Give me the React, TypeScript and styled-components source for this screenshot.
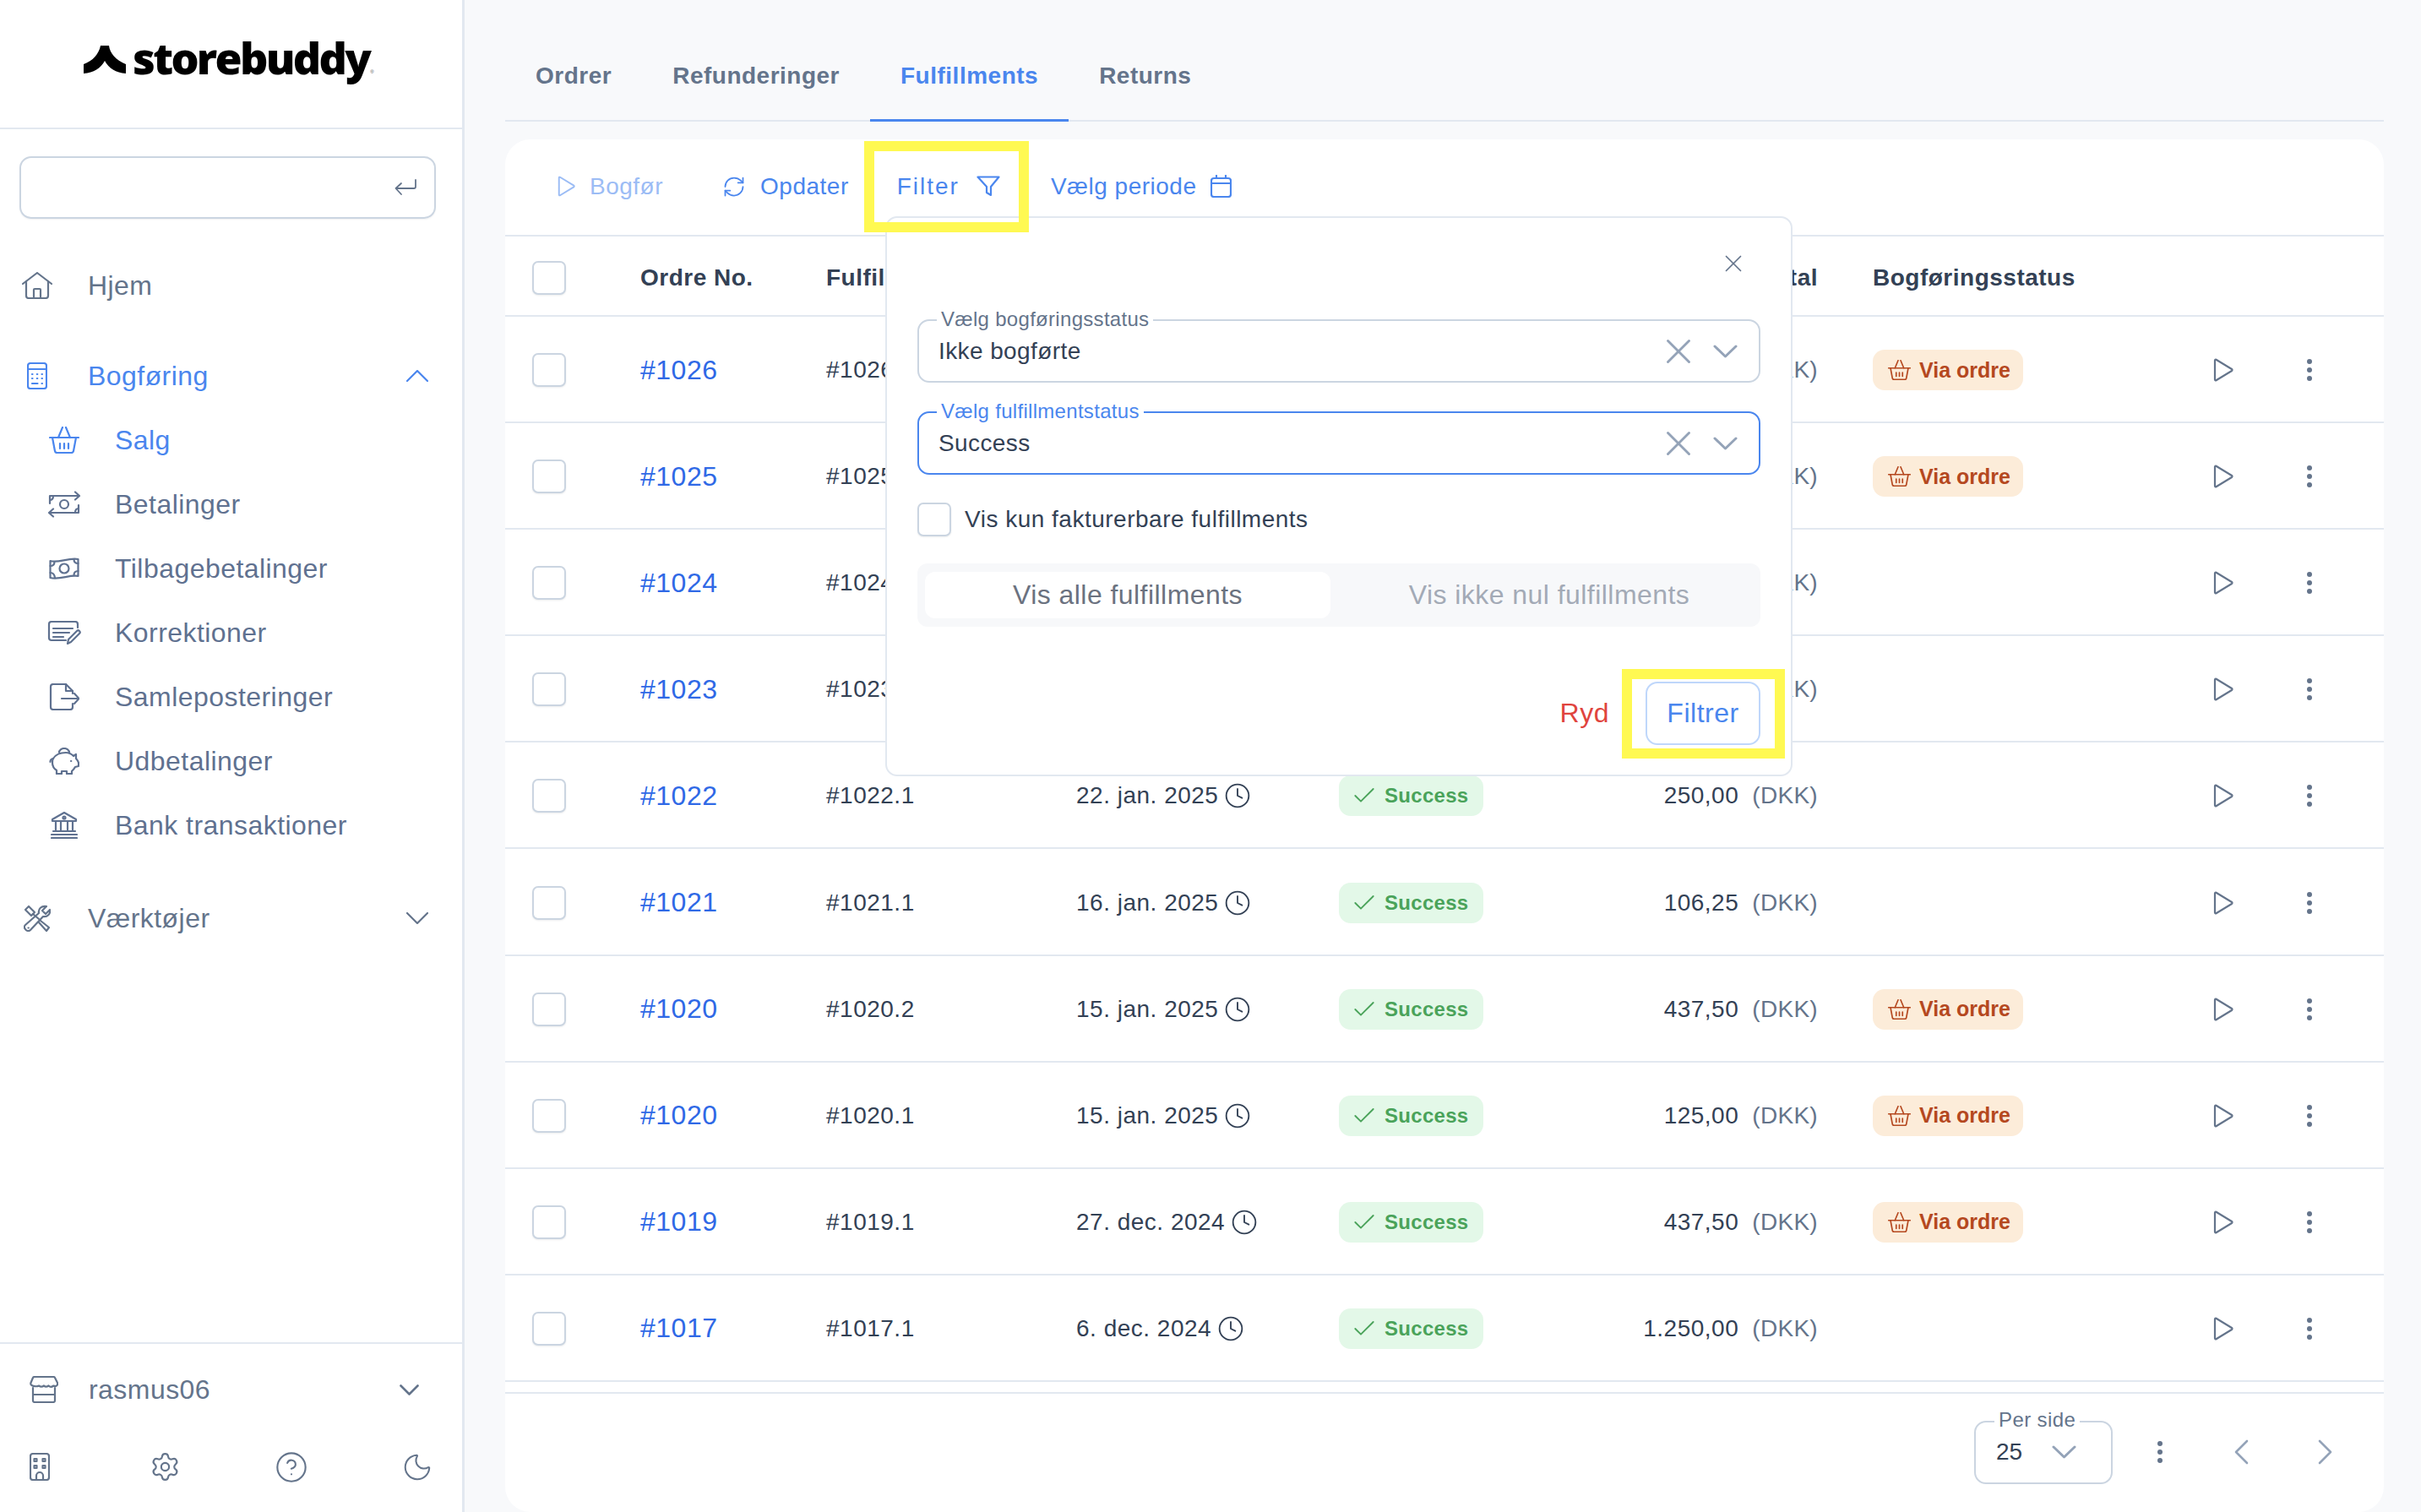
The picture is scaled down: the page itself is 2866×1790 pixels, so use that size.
import React from "react";
import styled, { createGlobalStyle } from "styled-components";
import { Check, CircleHelp, Clock, Moon, RefreshCw, Settings, X } from "lucide-react";

const colors = {
  blue: "#4a86ee",
  link: "#2f69e6",
  muted: "#64748b",
  subNav: "#5f7190",
  dark: "#334155",
  line: "#e2e8f0",
  field: "#cbd5e1",
  chevron: "#94a3b8",
  yellow: "#fff952",
};

const GlobalStyle = createGlobalStyle`
  html, body {
    margin: 0;
    padding: 0;
    background: #f8f9fb;
  }
  body {
    font-family: "Liberation Sans", Arial, sans-serif;
    color: ${colors.dark};
  }
  * {
    box-sizing: border-box;
  }
`;

const Page = styled.div`
  display: flex;
  width: 2866px;
  height: 1790px;
  overflow: hidden;
`;

/* sidebar */

const Sidebar = styled.aside`
  display: flex;
  flex-direction: column;
  flex: none;
  width: 550px;
  height: 100%;
  background: #fff;
  border-right: 3px solid ${colors.line};
`;

const LogoBar = styled.div`
  display: flex;
  align-items: flex-start;
  flex: none;
  height: 153px;
  padding: 35px 0 0 99px;
  border-bottom: 2px solid ${colors.line};
`;

const LogoMark = styled.svg`
  flex: none;
  width: 50px;
  height: 33px;
  margin: 19px 8px 0 0;
`;

const LogoText = styled.span`
  font-family: "Open Sans", sans-serif;
  font-size: 52px;
  font-weight: 800;
  line-height: 66px;
  letter-spacing: -2.7px;
  color: #000;
`;

const LogoMarkR = styled.span`
  align-self: flex-start;
  margin: 47px 0 0 1px;
  font-size: 6px;
  color: #555;
`;

const SearchBox = styled.div`
  display: flex;
  align-items: center;
  justify-content: flex-end;
  width: 493px;
  height: 74px;
  margin: 32px 0 0 23px;
  padding-right: 21px;
  border: 2.5px solid ${colors.field};
  border-radius: 14px;
  box-shadow: 0 1px 2px rgba(15, 23, 42, 0.06);
  color: ${colors.muted};
`;

const NavList = styled.nav`
  display: flex;
  flex-direction: column;
  margin-top: 41px;
`;

const NavGroup = styled.div<{ $top?: number }>`
  display: flex;
  flex-direction: column;
  margin-top: ${(props) => props.$top ?? 0}px;
`;

const NavRow = styled.div<{ $active?: boolean; $sub?: boolean }>`
  display: flex;
  align-items: center;
  height: 76px;
  padding-left: ${(props) => (props.$sub ? 32 : 0)}px;
  padding-right: 40px;
  color: ${(props) =>
    props.$active ? colors.blue : props.$sub ? colors.subNav : colors.muted};
  font-size: 32px;
  letter-spacing: 0.45px;
`;

const NavIcon = styled.span`
  display: flex;
  align-items: center;
  justify-content: center;
  flex: none;
  width: 88px;
  margin-right: 16px;
`;

const NavChevron = styled.svg`
  margin-left: auto;
  width: 26px;
  height: 14px;
`;

const SidebarFooter = styled.div`
  display: flex;
  flex-direction: column;
  margin-top: auto;
  height: 201px;
  border-top: 2.5px solid ${colors.line};
  color: ${colors.muted};
`;

const ShopRow = styled.div`
  display: grid;
  grid-template-columns: 34px 1fr 23px;
  column-gap: 36px;
  align-items: center;
  height: 108px;
  padding: 0 51px 0 35px;
  font-size: 32px;
  letter-spacing: 0.45px;
`;

const FooterIcons = styled.div`
  display: grid;
  grid-template-columns: repeat(4, 149px);
  align-items: center;
  justify-items: center;
  height: 75px;
  margin-left: -28px;
`;

/* main */

const Main = styled.main`
  display: flex;
  flex-direction: column;
  flex: 1;
  min-width: 0;
  padding: 0 44px 0 48px;
`;

const Tabs = styled.div`
  display: flex;
  flex: none;
  height: 144px;
  border-bottom: 2.5px solid ${colors.line};
`;

const Tab = styled.div<{ $active?: boolean }>`
  display: flex;
  align-items: center;
  height: 144px;
  padding: 73px 36px 35px;
  border-bottom: 3px solid ${(props) => (props.$active ? colors.blue : "transparent")};
  color: ${(props) => (props.$active ? colors.blue : colors.muted)};
  font-size: 28px;
  font-weight: 700;
  letter-spacing: 0.5px;
`;

const Card = styled.section`
  position: relative;
  display: flex;
  flex-direction: column;
  flex: 1;
  margin-top: 21px;
  background: #fff;
  border-radius: 30px;
`;

const Toolbar = styled.div`
  display: flex;
  align-items: center;
  flex: none;
  gap: 57px;
  height: 115px;
  padding: 0 0 2px 62px;
  border-bottom: 2.5px solid ${colors.line};
`;

const ToolButton = styled.div<{ $disabled?: boolean; $gap?: number; $spacing?: number; $after?: number }>`
  position: relative;
  display: flex;
  align-items: center;
  gap: ${(props) => props.$gap ?? 17}px;
  height: 40px;
  color: ${colors.blue};
  opacity: ${(props) => (props.$disabled ? 0.55 : 1)};
  font-size: 28px;
  letter-spacing: ${(props) => props.$spacing ?? 0.5}px;
  margin-right: ${(props) => props.$after ?? 0}px;
`;

const FilterButton = styled(ToolButton)`
  &::after {
    content: "";
    position: absolute;
    top: -34px;
    right: -34px;
    bottom: -34px;
    left: -39px;
    z-index: 6;
    border: 12px solid ${colors.yellow};
    pointer-events: none;
  }
`;

const TableRow = styled.div<{ $header?: boolean }>`
  display: grid;
  grid-template-columns: 128px 220px 296px 311px 200px 432px 403px 64px 100px;
  align-items: center;
  flex: none;
  height: ${(props) => (props.$header ? "95px" : "126.1px")};
  padding: ${(props) => (props.$header ? "5px" : "2px")} 0 0 32px;
  border-bottom: 2.5px solid ${colors.line};
  font-size: 28px;
  letter-spacing: 0.5px;
  font-weight: ${(props) => (props.$header ? 700 : 400)};
`;

const Checkbox = styled.span`
  display: block;
  width: 40px;
  height: 40px;
  border: 2.5px solid ${colors.field};
  border-radius: 7px;
  background: #fff;
  box-shadow: 0 1px 2px rgba(15, 23, 42, 0.08);
`;

const OrderLink = styled.span`
  color: ${colors.link};
  font-size: 32px;
  letter-spacing: 0.5px;
`;

const DateCell = styled.span`
  display: flex;
  align-items: center;
  gap: 7px;
`;

const AmountCell = styled.span`
  display: flex;
  justify-content: flex-end;
  gap: 16px;
  padding-right: 65px;
`;

const Currency = styled.span`
  color: ${colors.muted};
  letter-spacing: 0.3px;
`;

const Pill = styled.span<{ $tone: "green" | "orange" }>`
  display: inline-flex;
  align-items: center;
  justify-self: start;
  gap: ${(props) => (props.$tone === "green" ? 8 : 10)}px;
  height: 48px;
  padding: 0 ${(props) => (props.$tone === "green" ? "17px 0 14px" : "15px 0 18px")};
  border-radius: 14px;
  background: ${(props) => (props.$tone === "green" ? "#e3f8e8" : "#fcecd9")};
  color: ${(props) => (props.$tone === "green" ? "#4aa35a" : "#b5481f")};
  font-size: ${(props) => (props.$tone === "green" ? 24 : 25)}px;
  font-weight: 700;
  letter-spacing: ${(props) => (props.$tone === "green" ? 0.3 : 0)}px;
`;

const RowAction = styled.span`
  display: flex;
  color: ${colors.muted};
`;

const DotsCell = styled(RowAction)`
  justify-content: center;
`;

const PagerBar = styled.div`
  display: flex;
  align-items: center;
  justify-content: flex-end;
  flex: none;
  height: 141px;
  margin-top: 12px;
  padding: 0 61px 0 0;
  border-top: 2.5px solid ${colors.line};
`;

const PerSide = styled.div`
  position: relative;
  display: flex;
  align-items: center;
  gap: 35px;
  width: 164px;
  height: 75px;
  padding-left: 24px;
  border: 2.5px solid ${colors.field};
  border-radius: 14px;
  font-size: 28px;
`;

const PerSideLabel = styled.span`
  position: absolute;
  top: -17px;
  left: 22px;
  padding: 0 5px;
  background: #fff;
  color: ${colors.muted};
  font-size: 24px;
  line-height: 28px;
  letter-spacing: 0.4px;
`;

const PagerIcon = styled.span<{ $left: number; $strong?: boolean }>`
  display: flex;
  margin-left: ${(props) => props.$left}px;
  color: ${(props) => (props.$strong ? colors.muted : colors.chevron)};
`;

/* filter popover */

const Popover = styled.div`
  position: absolute;
  top: 91px;
  left: 450px;
  z-index: 5;
  display: flex;
  flex-direction: column;
  width: 1074px;
  height: 663px;
  padding: 0 36px;
  background: #fff;
  border: 2px solid ${colors.line};
  border-radius: 14px;
`;

const CloseRow = styled.div`
  display: flex;
  justify-content: flex-end;
  flex: none;
  height: 120px;
  padding: 37px 15px 0 0;
  color: ${colors.muted};
`;

const SelectField = styled.div<{ $focused?: boolean }>`
  position: relative;
  display: flex;
  align-items: center;
  flex: none;
  height: 75px;
  padding: 0 25px 0 23px;
  margin-bottom: 34px;
  border: 2.5px solid ${(props) => (props.$focused ? colors.blue : colors.field)};
  border-radius: 14px;
  font-size: 28px;
  letter-spacing: 0.4px;
`;

const SelectLabel = styled.span<{ $focused?: boolean }>`
  position: absolute;
  top: -16px;
  left: 21px;
  padding: 0 5px;
  background: #fff;
  color: ${(props) => (props.$focused ? colors.blue : colors.muted)};
  font-size: 24px;
  line-height: 28px;
  letter-spacing: 0.3px;
`;

const SelectValue = styled.span`
  flex: 1;
`;

const SelectIcons = styled.span`
  display: flex;
  align-items: center;
  gap: 16px;
  color: ${colors.chevron};
`;

const CheckRow = styled.label`
  display: flex;
  align-items: center;
  flex: none;
  gap: 16px;
  margin-top: -1px;
  font-size: 28px;
  letter-spacing: 0.5px;
`;

const Segmented = styled.div`
  display: grid;
  grid-template-columns: 480px 1fr;
  align-items: center;
  flex: none;
  height: 75px;
  margin-top: 32px;
  padding: 0 9px;
  border-radius: 12px;
  background: #f7f8fa;
`;

const Segment = styled.div<{ $active?: boolean }>`
  display: flex;
  align-items: center;
  justify-content: center;
  height: 55px;
  padding-left: ${(props) => (props.$active ? 0 : 18)}px;
  border-radius: 12px;
  background: ${(props) => (props.$active ? "#fff" : "transparent")};
  color: ${(props) => (props.$active ? "#6b7280" : "#a3aab6")};
  font-size: 32px;
  letter-spacing: 0.45px;
`;

const PopoverActions = styled.div`
  display: flex;
  align-items: center;
  justify-content: flex-end;
  flex: none;
  gap: 43px;
  margin-top: 65px;
`;

const ClearButton = styled.span`
  color: #e0443e;
  font-size: 32px;
  letter-spacing: 0.5px;
`;

const ApplyButton = styled.div`
  position: relative;
  display: flex;
  align-items: center;
  justify-content: center;
  width: 136px;
  height: 75px;
  border: 2.5px solid #bfd7fb;
  border-radius: 14px;
  color: ${colors.blue};
  font-size: 32px;
  letter-spacing: 0.5px;

  &::after {
    content: "";
    position: absolute;
    top: -17px;
    right: -31px;
    bottom: -18px;
    left: -30px;
    border: 12px solid ${colors.yellow};
    pointer-events: none;
  }
`;

/* icons */

const Line = (props: React.SVGProps<SVGSVGElement>) => (
  <svg
    fill="none"
    stroke="currentColor"
    strokeWidth={2.2}
    strokeLinecap="round"
    strokeLinejoin="round"
    {...props}
  />
);

const HomeIcon = () => (
  <Line width="36" height="32" viewBox="0 0 36 32">
    <path d="M1 14 18 1l17 13" />
    <path d="M5 11v17a3 3 0 0 0 3 3h20a3 3 0 0 0 3-3V11" />
    <path d="M14 31V21a1 1 0 0 1 1-1h6a1 1 0 0 1 1 1v10" />
  </Line>
);

const CalculatorIcon = () => (
  <Line width="24" height="32" viewBox="0 0 24 32">
    <rect x="1" y="1" width="22" height="30" rx="3" />
    <path d="M1 8h22" />
    <path d="M6 14h.5M11.800 14h.5M17.500 14h.5M6 19h.5M11.800 19h.5M17.500 19h.5M6 25h6.500M17.500 25h.5" />
  </Line>
);

const BasketIcon = ({ size = 36 }: { size?: number }) => (
  <Line width={size} height={(size * 32) / 36} viewBox="0 0 36 32">
    <path d="M11 13 16 1M25 13 20 1" />
    <path d="M1 13h34" />
    <path d="M4 13l3 16a2.500 2.500 0 0 0 2.500 2h17a2.500 2.500 0 0 0 2.500-2l3-16" />
    <path d="M13 20v6M18 20v6M23 20v6" />
  </Line>
);

const PaymentsIcon = () => (
  <Line width="40" height="32" viewBox="0 0 40 32">
    <path d="M3 15V6h34M33 1.500 38 6l-5 4.500" />
    <path d="M37 17v9H3M7 21.500 2 26l5 4.500" />
    <circle cx="20" cy="16" r="5" />
    <path d="M3 11c3 0 4-2 4-5M37 21c-3 0-4 2-4 5" />
  </Line>
);

const RefundIcon = () => (
  <Line width="36" height="28" viewBox="0 0 36 28">
    <path d="M1.500 5c9 3 21-4 33-2v20c-10-2-22 5-33 2z" />
    <circle cx="18" cy="14" r="5.500" />
    <path d="M1.500 11c4 0 5-3 5-5M34.500 17c-4 0-5 3-5 5M1.500 19c3 0 5 2 5.500 6M34.500 8c-3 0-5-2-5-5" />
  </Line>
);

const CorrectionIcon = () => (
  <Line width="40" height="28" viewBox="0 0 40 28">
    <path d="M36 8V4a3 3 0 0 0-3-3H5a3 3 0 0 0-3 3v16a3 3 0 0 0 3 3h17" />
    <path d="M7 9h23M7 14h19M7 19h12" />
    <path d="M38 15 28 25l-4 2 1-5 10-10a2 2 0 0 1 3 3z" />
  </Line>
);

const PostingIcon = () => (
  <Line width="36" height="32" viewBox="0 0 36 32">
    <path d="M28 12V9l-8-8H5a3 3 0 0 0-3 3v24a3 3 0 0 0 3 3h20a3 3 0 0 0 3-3v-4" />
    <path d="M20 1v8h8" />
    <path d="M15 18h20M30 12l5.500 6-5.500 6" />
  </Line>
);

const PiggyIcon = () => (
  <Line width="36" height="32" viewBox="0 0 36 32">
    <path d="M5 13c3-5 9-7 15-7 4 0 7 2 9 4l3-2v5c1 1 2 2 3 5v4l-4 1c-1 2-3 4-4 5v3h-6v-3h-6v3H9v-4c-3-2-5-5-5-9 0-2 0-4 1-5z" />
    <path d="M5 13c-2 0-3.500 2-3.500 4" />
    <path d="M12 6c0-3 3-5 6-5s6 2 6 5" />
    <path d="M26 16h.3" />
  </Line>
);

const BankIcon = () => (
  <Line width="32" height="32" viewBox="0 0 32 32">
    <path d="M16 1 2 9v2h28V9z" />
    <circle cx="16" cy="7" r="1.500" />
    <path d="M6 12v10M12 12v10M20 12v10M26 12v10" />
    <path d="M3 23h26M1 27h30M1 31h30" />
  </Line>
);

const ToolsIcon = () => (
  <Line width="32" height="32" viewBox="0 0 32 32">
    <path d="M2 6l4-4 7 7-4 4z" />
    <path d="M11 11l7 6M20 19l10 8-3 4-9-10" />
    <path d="M18 10c-1-5 3-9 9-8l-5 5 4 4 5-5c1 5-3 9-8 8L8 30c-2 2-5 1-6-1-2-2-1-4 0-5z" />
    <path d="M5.500 27.500h.3" />
  </Line>
);

const StoreIcon = () => (
  <Line width="34" height="32" viewBox="0 0 34 32">
    <path d="M6 1h22a2 2 0 0 1 2 1l3 6c1 3-2 5-4.500 3.500-2 1.500-4.500 1.500-6 0-2 1.500-4 1.500-5.500 0-2 1.500-4 1.500-6 0C8 13 0 12 1.500 8L4 2a2 2 0 0 1 2-1z" />
    <path d="M4 14v15a2 2 0 0 0 2 2h22a2 2 0 0 0 2-2V14M4 22h26" />
  </Line>
);

const BuildingIcon = () => (
  <Line width="24" height="33" viewBox="0 0 24 33">
    <rect x="1" y="1" width="22" height="31" rx="3" />
    <path d="M5.500 7h3v3h-3zM15.500 7h3v3h-3zM5.500 15h3v3h-3zM15.500 15h3v3h-3z" />
    <path d="M8 32v-5a4 4 0 0 1 8 0v5" />
  </Line>
);

const EnterIcon = () => (
  <Line width="26" height="20" viewBox="0 0 26 20" strokeWidth={1.8}>
    <path d="M25 1v8a2 2 0 0 1-2 2H2M8 5l-6.500 6L8 18" />
  </Line>
);

const PlayIcon = ({ width, height }: { width: number; height: number }) => (
  <Line width={width} height={height} viewBox="0 0 24 28">
    <path d="M2 2.500v23a1 1 0 0 0 1.500.8L22 15a1.200 1.200 0 0 0 0-2L3.500 1.700A1 1 0 0 0 2 2.500z" />
  </Line>
);

const FunnelIcon = () => (
  <Line width="28" height="25" viewBox="0 0 28 25">
    <path d="M1.500 1.500h25L17 13v10l-5-3v-7z" />
  </Line>
);

const CalendarIcon = () => (
  <Line width="25" height="27" viewBox="0 0 25 27">
    <rect x="1" y="4" width="23" height="22" rx="3" />
    <path d="M1 10h23M7 1v3M18 1v3" />
  </Line>
);

const Chevron = ({ up }: { up?: boolean }) => (
  <NavChevron
    viewBox="0 0 26 14"
    fill="none"
    stroke="currentColor"
    strokeWidth={2.2}
    strokeLinecap="round"
    strokeLinejoin="round"
  >
    <path d={up ? "M1 13 13 1l12 12" : "M1 1l12 12L25 1"} />
  </NavChevron>
);

const SelectChevron = () => (
  <Line width="29" height="16" viewBox="0 0 29 16" strokeWidth={3}>
    <path d="M2 2l12.500 12L27 2" />
  </Line>
);

const Dots = () => (
  <svg width="8" height="28" viewBox="0 0 8 28" fill="currentColor">
    <circle cx="4" cy="4" r="3" />
    <circle cx="4" cy="14" r="3" />
    <circle cx="4" cy="24" r="3" />
  </svg>
);

const subItems = [
  { label: "Salg", icon: <BasketIcon />, active: true },
  { label: "Betalinger", icon: <PaymentsIcon /> },
  { label: "Tilbagebetalinger", icon: <RefundIcon /> },
  { label: "Korrektioner", icon: <CorrectionIcon /> },
  { label: "Samleposteringer", icon: <PostingIcon /> },
  { label: "Udbetalinger", icon: <PiggyIcon /> },
  { label: "Bank transaktioner", icon: <BankIcon /> },
];

type Row = { order: string; ful: string; date?: string; amount?: string; via: boolean };

// the first four rows sit behind the filter popover, only their edges show
const rows: Row[] = [
  { order: "#1026", ful: "#1026.1", via: true },
  { order: "#1025", ful: "#1025.1", via: true },
  { order: "#1024", ful: "#1024.1", via: false },
  { order: "#1023", ful: "#1023.1", via: false },
  { order: "#1022", ful: "#1022.1", date: "22. jan. 2025", amount: "250,00", via: false },
  { order: "#1021", ful: "#1021.1", date: "16. jan. 2025", amount: "106,25", via: false },
  { order: "#1020", ful: "#1020.2", date: "15. jan. 2025", amount: "437,50", via: true },
  { order: "#1020", ful: "#1020.1", date: "15. jan. 2025", amount: "125,00", via: true },
  { order: "#1019", ful: "#1019.1", date: "27. dec. 2024", amount: "437,50", via: true },
  { order: "#1017", ful: "#1017.1", date: "6. dec. 2024", amount: "1.250,00", via: false },
];

const FilterPopover: React.FC = () => (
  <Popover>
    <CloseRow>
      <X size={34} strokeWidth={1.2} />
    </CloseRow>
    <SelectField>
      <SelectLabel>Vælg bogføringsstatus</SelectLabel>
      <SelectValue>Ikke bogførte</SelectValue>
      <SelectIcons>
        <X size={50} strokeWidth={1.4} />
        <SelectChevron />
      </SelectIcons>
    </SelectField>
    <SelectField $focused>
      <SelectLabel $focused>Vælg fulfillmentstatus</SelectLabel>
      <SelectValue>Success</SelectValue>
      <SelectIcons>
        <X size={50} strokeWidth={1.4} />
        <SelectChevron />
      </SelectIcons>
    </SelectField>
    <CheckRow>
      <Checkbox />
      Vis kun fakturerbare fulfillments
    </CheckRow>
    <Segmented>
      <Segment $active>Vis alle fulfillments</Segment>
      <Segment>Vis ikke nul fulfillments</Segment>
    </Segmented>
    <PopoverActions>
      <ClearButton>Ryd</ClearButton>
      <ApplyButton>Filtrer</ApplyButton>
    </PopoverActions>
  </Popover>
);

const App: React.FC = () => (
  <>
    <GlobalStyle />
    <Page>
      <Sidebar>
        <LogoBar>
          <LogoMark viewBox="0 0 50 33">
            <path
              fill="#000"
              d="M20 0h10c1 9 8 17 20 22v11C38 32 30 27 25 18 20 27 12 32 0 33V22C11 18 18 10 20 0z"
            />
          </LogoMark>
          <LogoText>storebuddy</LogoText>
          <LogoMarkR>®</LogoMarkR>
        </LogoBar>
        <SearchBox>
          <EnterIcon />
        </SearchBox>
        <NavList>
          <NavRow>
            <NavIcon>
              <HomeIcon />
            </NavIcon>
            Hjem
          </NavRow>
          <NavGroup $top={31}>
            <NavRow $active>
              <NavIcon>
                <CalculatorIcon />
              </NavIcon>
              Bogføring
              <Chevron up />
            </NavRow>
            {subItems.map((item) => (
              <NavRow key={item.label} $sub $active={item.active}>
                <NavIcon>{item.icon}</NavIcon>
                {item.label}
              </NavRow>
            ))}
          </NavGroup>
          <NavGroup $top={34}>
            <NavRow>
              <NavIcon>
                <ToolsIcon />
              </NavIcon>
              Værktøjer
              <Chevron />
            </NavRow>
          </NavGroup>
        </NavList>
        <SidebarFooter>
          <ShopRow>
            <StoreIcon />
            rasmus06
            <Line width="23" height="13" viewBox="0 0 23 13" strokeWidth={2.6}>
              <path d="M1.500 1.500 11.500 11.500l10-10" />
            </Line>
          </ShopRow>
          <FooterIcons>
            <BuildingIcon />
            <Settings size={37} strokeWidth={1.4} />
            <CircleHelp size={40} strokeWidth={1.25} />
            <Moon size={38} strokeWidth={1.3} />
          </FooterIcons>
        </SidebarFooter>
      </Sidebar>
      <Main>
        <Tabs>
          <Tab>Ordrer</Tab>
          <Tab>Refunderinger</Tab>
          <Tab $active>Fulfillments</Tab>
          <Tab>Returns</Tab>
        </Tabs>
        <Card>
          <Toolbar>
            <ToolButton $disabled $after={13}>
              <PlayIcon width={21} height={25} />
              Bogfør
            </ToolButton>
            <ToolButton>
              <RefreshCw size={28} strokeWidth={1.5} />
              Opdater
            </ToolButton>
            <FilterButton $gap={20} $spacing={2} $after={3}>
              Filter
              <FunnelIcon />
            </FilterButton>
            <ToolButton $gap={16}>
              Vælg periode
              <CalendarIcon />
            </ToolButton>
          </Toolbar>
          <TableRow $header>
            <Checkbox />
            <span>Ordre No.</span>
            <span>Fulfillment</span>
            <span />
            <span />
            <AmountCell>Total</AmountCell>
            <span>Bogføringsstatus</span>
          </TableRow>
          {rows.map((row) => (
            <TableRow key={row.ful}>
              <Checkbox />
              <OrderLink>{row.order}</OrderLink>
              <span>{row.ful}</span>
              {row.date ? (
                <DateCell>
                  {row.date}
                  <Clock size={32} strokeWidth={1.4} />
                </DateCell>
              ) : (
                <span />
              )}
              {row.date ? (
                <Pill $tone="green">
                  <Check size={32} strokeWidth={1.4} />
                  Success
                </Pill>
              ) : (
                <span />
              )}
              <AmountCell>
                {row.amount && <span>{row.amount}</span>}
                <Currency>(DKK)</Currency>
              </AmountCell>
              {row.via ? (
                <Pill $tone="orange">
                  <BasketIcon size={27} />
                  Via ordre
                </Pill>
              ) : (
                <span />
              )}
              <RowAction>
                <PlayIcon width={24} height={28} />
              </RowAction>
              <DotsCell>
                <Dots />
              </DotsCell>
            </TableRow>
          ))}
          <PagerBar>
            <PerSide>
              <PerSideLabel>Per side</PerSideLabel>
              25
              <Line width="29" height="18" viewBox="0 0 29 18" strokeWidth={3} style={{ color: colors.chevron }}>
                <path d="M2 3l12.500 12L27 3" />
              </Line>
            </PerSide>
            <PagerIcon $left={52} $strong>
              <Dots />
            </PagerIcon>
            <PagerIcon $left={84}>
              <Line width="17" height="30" viewBox="0 0 17 30" strokeWidth={2.6}>
                <path d="M15 2 2 15l13 13" />
              </Line>
            </PagerIcon>
            <PagerIcon $left={82}>
              <Line width="17" height="30" viewBox="0 0 17 30" strokeWidth={2.6}>
                <path d="M2 2l13 13L2 28" />
              </Line>
            </PagerIcon>
          </PagerBar>
          <FilterPopover />
        </Card>
      </Main>
    </Page>
  </>
);

export default App;
